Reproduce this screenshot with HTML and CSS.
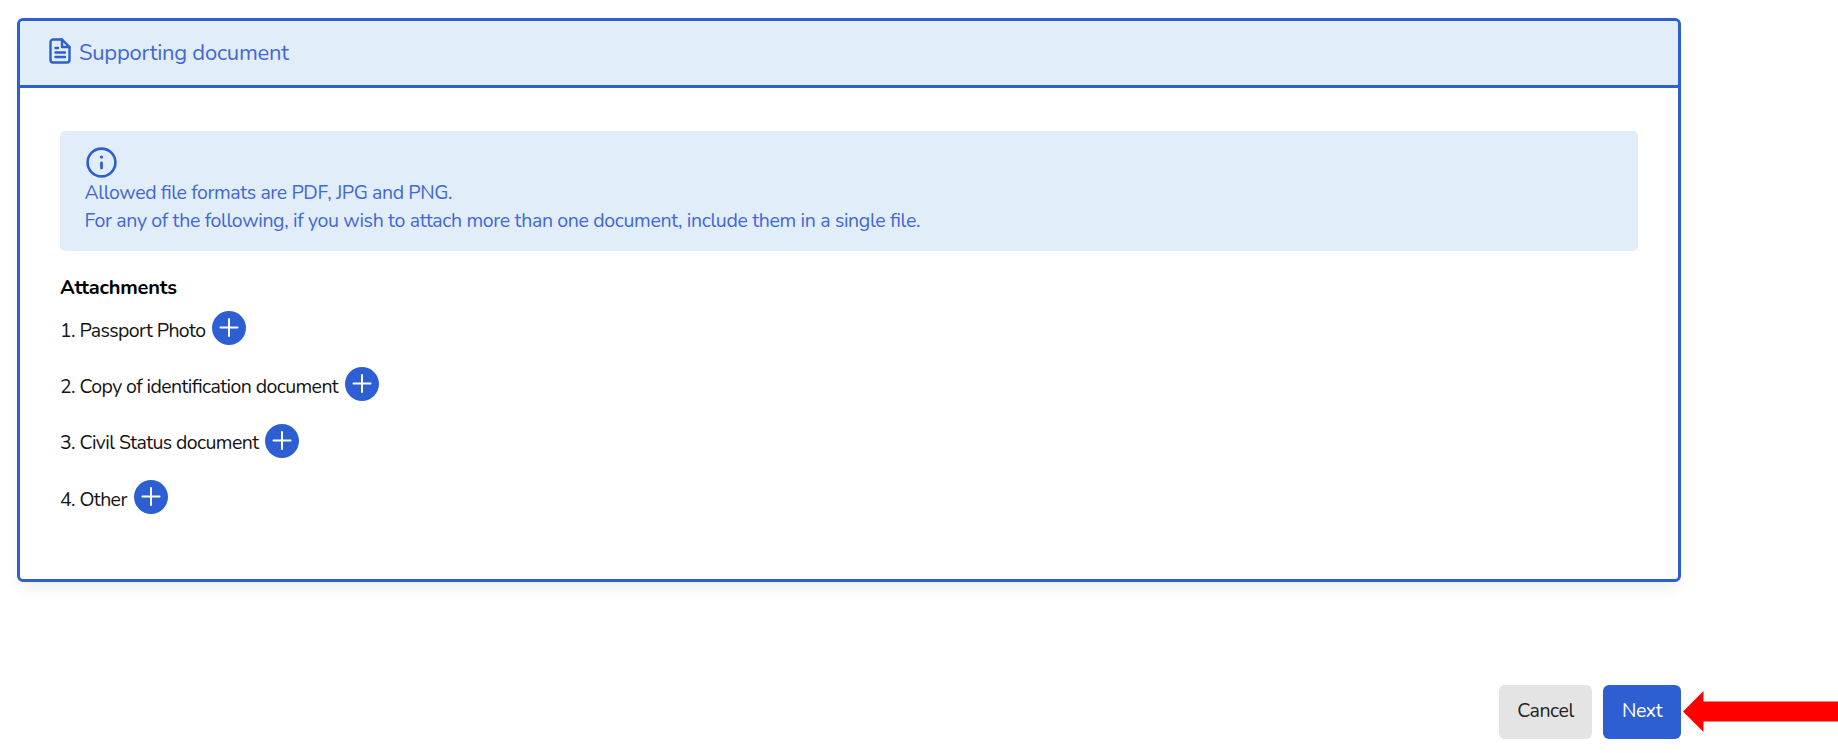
FILE: index.html
```html
<!DOCTYPE html>
<html lang="en">
<head>
  <meta charset="UTF-8" />
  <title>Supporting document</title>
  <link rel="stylesheet" href="styles.css">
</head>

<body>

  <div class="page">

    <section class="card">
      <div class="card-header">
        <svg class="doc-icon" viewBox="0 0 22 26" fill="none" stroke="currentColor" stroke-width="2.4" stroke-linecap="round" stroke-linejoin="round">
          <path d="M13 1.5H4A2.5 2.5 0 0 0 1.5 4v18A2.5 2.5 0 0 0 4 24.5h14a2.5 2.5 0 0 0 2.5-2.5V9z" />
          <path d="M13 1.5V9h7.5M6.5 10h2.5M6.5 14.5h9.5M6.5 19h9.5" />
        </svg>
        <span class="card-title">Supporting document</span>
      </div>

      <div class="card-body">
        <div class="alert">
          <svg class="info-icon" viewBox="0 0 32 32" fill="none" stroke="currentColor">
            <circle cx="16.5" cy="15.5" r="13.9" stroke-width="2.6" />
            <path d="M16.5 16v5" stroke-width="2.8" stroke-linecap="round" />
            <circle cx="16.5" cy="10.1" r="1.6" fill="currentColor" stroke="none" />
          </svg>
          <p class="formats">Allowed file formats are PDF, JPG and PNG.</p>
          <p>For any of the following, if you wish to attach more than one document, include them in a single file.</p>
        </div>

        <h2 class="heading">Attachments</h2>

        <div class="row">
          <span class="row-label">1. Passport Photo</span>
          <button class="add" aria-label="Add"><svg viewBox="0 0 34 34"><path d="M8.5 16.5h17M17 8v17" /></svg></button>
        </div>
        <div class="row">
          <span class="row-label">2. Copy of identification document</span>
          <button class="add" aria-label="Add"><svg viewBox="0 0 34 34"><path d="M8.5 16.5h17M17 8v17" /></svg></button>
        </div>
        <div class="row">
          <span class="row-label">3. Civil Status document</span>
          <button class="add" aria-label="Add"><svg viewBox="0 0 34 34"><path d="M8.5 16.5h17M17 8v17" /></svg></button>
        </div>
        <div class="row">
          <span class="row-label">4. Other</span>
          <button class="add" aria-label="Add"><svg viewBox="0 0 34 34"><path d="M8.5 16.5h17M17 8v17" /></svg></button>
        </div>
      </div>
    </section>

    <div class="actions">
      <button class="btn btn-cancel">Cancel</button>
      <button class="btn btn-next">Next</button>
      <svg class="arrow" viewBox="0 0 155 41"><path d="M0 20.5L20.5 0v10.5H155v20H20.5V41z" fill="#ff0000" /></svg>
    </div>

  </div>

</body>
</html>
```

FILE: styles.css
```css
* {
  box-sizing: border-box;
}

body {
  margin: 0;
  background-color: #fff;
  color: #141414;
  font-family: Nunito, Lato, sans-serif;
  font-size: 19.5px;
  font-feature-settings: "liga" 1;
  line-height: 28px;
  letter-spacing: -0.34px;
  overflow: hidden;
}

p,
h2 {
  margin: 0;
}

svg {
  display: block;
}

.page {
  padding: 17.5px 0 0 17px;
}

.card {
  width: 1664px;
  height: 564px;
  border: 3px solid #2d5fd3;
  border-radius: 6px;
  box-shadow: 0 9px 18px -4px rgba(0, 0, 0, 0.08);
}

.card-header {
  display: flex;
  align-items: center;
  height: 67.5px;
  padding: 0 29px;
  background-color: #e1edf9;
  border-bottom: 3px solid #2d5fd3;
  border-radius: 3px 3px 0 0;
  color: #2d5fd3;
}

.doc-icon {
  width: 22px;
  height: 26px;
  margin: 0 8px 3px 0;
}

.card-title {
  color: #4268d5;
  font-size: 22px;
  letter-spacing: -0.26px;
}

.card-body {
  padding: 43px 40px 0;
}

.alert {
  height: 120px;
  padding: 15.5px 24.5px;
  background-color: #e1edf9;
  border-radius: 5px;
  color: #4268d5;
}

.info-icon {
  width: 32px;
  height: 32px;
  color: #2d5fd3;
}

.formats {
  letter-spacing: -0.39px;
}

.heading {
  margin-top: 23px;
  color: #000;
  font-size: 20px;
  line-height: 28px;
  letter-spacing: -0.2px;
}

.row {
  display: flex;
  align-items: center;
  gap: 7px;
  height: 34px;
  margin: 9px 0 22.4px;
}

.row + .row {
  margin-top: 0;
}

.row-label {
  padding-top: 5px;
  letter-spacing: -0.59px;
}

.add {
  width: 34px;
  height: 34px;
  padding: 0;
  background-color: #2d5fd3;
  border: none;
  border-radius: 50%;
  cursor: pointer;
}

.add path {
  stroke: #fff;
  stroke-width: 2;
  stroke-linecap: round;
}

.actions {
  display: flex;
  align-items: center;
  padding: 103px 0 0 1482px;
}

.btn {
  flex: none;
  height: 54px;
  padding: 0 0 2px;
  border: none;
  border-radius: 6px;
  font-family: inherit;
  font-size: 19.5px;
  letter-spacing: -0.42px;
  cursor: pointer;
}

.btn-cancel {
  width: 93px;
  margin-right: 11px;
  background-color: #e4e4e4;
  color: #222;
}

.btn-next {
  width: 78px;
  background-color: #2d5fd3;
  color: #fff;
}

.arrow {
  flex: none;
  width: 155px;
  height: 41px;
  margin-left: 2px;
}
```
